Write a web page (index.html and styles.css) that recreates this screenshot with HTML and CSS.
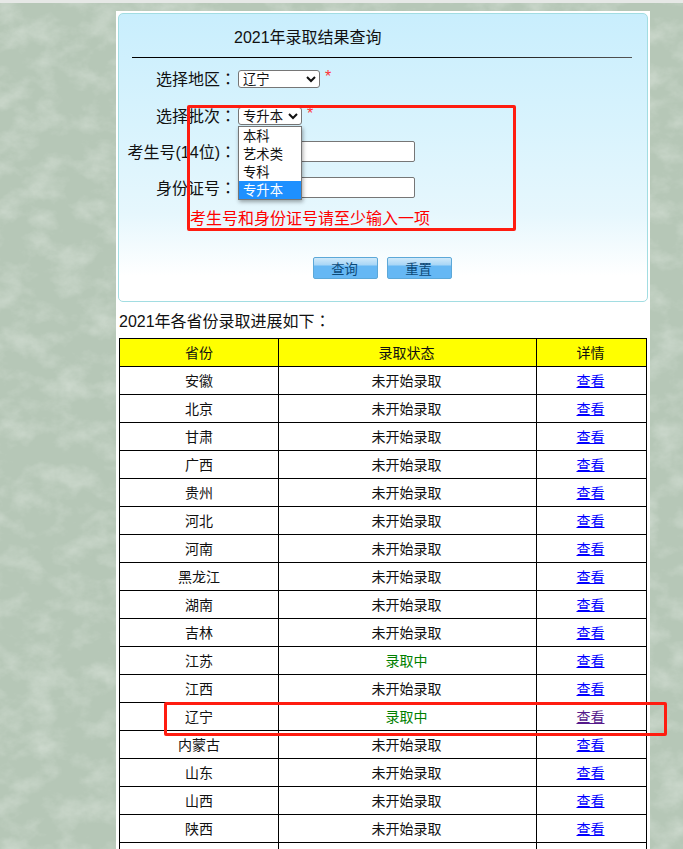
FILE: index.html
```html
<!DOCTYPE html>
<html lang="zh-CN">
<head>
  <meta charset="UTF-8">
  <title>2021年录取结果查询</title>
  <link rel="stylesheet" href="styles.css">
</head>
<body>

  <!-- mottled page background -->
  <svg class="texture" width="683" height="849" aria-hidden="true">
    <filter id="mottle" x="0" y="0" width="100%" height="100%">
      <feTurbulence type="fractalNoise" baseFrequency="0.035 0.045" numOctaves="5" seed="11"/>
      <feColorMatrix type="matrix" values="0 0 0 0 0.76  0 0 0 0 0.82  0 0 0 0 0.76  1 0 0 0 -0.42"/>
    </filter>
    <rect width="683" height="849" filter="url(#mottle)"/>
  </svg>

  <div class="wrap">

    <!-- Query form -->
    <div class="card">
      <h1 class="title">2021年录取结果查询</h1>
      <div class="rule"></div>

      <div class="row row-area">
        <label class="label">选择地区<span class="colon" lang="zh-TW">：</span></label>
        <select class="pick pick-area"><option>辽宁</option></select>
        <span class="star">*</span>
      </div>

      <div class="row row-batch">
        <label class="label">选择批次<span class="colon" lang="zh-TW">：</span></label>
        <div class="pick-holder">
          <select class="pick pick-batch"><option>专升本</option></select>
          <ul class="dropdown">
            <li>本科</li>
            <li>艺术类</li>
            <li>专科</li>
            <li class="current">专升本</li>
          </ul>
        </div>
        <span class="star">*</span>
      </div>

      <div class="row row-exam">
        <label class="label">考生号(14位)<span class="colon" lang="zh-TW">：</span></label>
        <input class="field" type="text">
      </div>

      <div class="row row-id">
        <label class="label">身份证号<span class="colon" lang="zh-TW">：</span></label>
        <input class="field" type="text">
      </div>

      <p class="hint">考生号和身份证号请至少输入一项</p>

      <div class="actions">
        <button class="btn">查询</button>
        <button class="btn">重置</button>
      </div>
    </div>

    <p class="caption">2021年各省份录取进展如下<span class="colon" lang="zh-TW">：</span></p>

    <table class="progress">
      <colgroup>
        <col class="col-province">
        <col class="col-status">
        <col class="col-detail">
      </colgroup>
      <thead>
        <tr><th>省份</th><th>录取状态</th><th>详情</th></tr>
      </thead>
      <tbody>
        <tr><td>安徽</td><td>未开始录取</td><td><a href="#">查看</a></td></tr>
        <tr><td>北京</td><td>未开始录取</td><td><a href="#">查看</a></td></tr>
        <tr><td>甘肃</td><td>未开始录取</td><td><a href="#">查看</a></td></tr>
        <tr><td>广西</td><td>未开始录取</td><td><a href="#">查看</a></td></tr>
        <tr><td>贵州</td><td>未开始录取</td><td><a href="#">查看</a></td></tr>
        <tr><td>河北</td><td>未开始录取</td><td><a href="#">查看</a></td></tr>
        <tr><td>河南</td><td>未开始录取</td><td><a href="#">查看</a></td></tr>
        <tr><td>黑龙江</td><td>未开始录取</td><td><a href="#">查看</a></td></tr>
        <tr><td>湖南</td><td>未开始录取</td><td><a href="#">查看</a></td></tr>
        <tr><td>吉林</td><td>未开始录取</td><td><a href="#">查看</a></td></tr>
        <tr><td>江苏</td><td class="open">录取中</td><td><a href="#">查看</a></td></tr>
        <tr><td>江西</td><td>未开始录取</td><td><a href="#">查看</a></td></tr>
        <tr><td>辽宁</td><td class="open">录取中</td><td><a class="visited" href="#">查看</a></td></tr>
        <tr><td>内蒙古</td><td>未开始录取</td><td><a href="#">查看</a></td></tr>
        <tr><td>山东</td><td>未开始录取</td><td><a href="#">查看</a></td></tr>
        <tr><td>山西</td><td>未开始录取</td><td><a href="#">查看</a></td></tr>
        <tr><td>陕西</td><td>未开始录取</td><td><a href="#">查看</a></td></tr>
        <tr><td></td><td></td><td></td></tr>
      </tbody>
    </table>

    <!-- Red annotation boxes drawn over the screenshot -->
    <div class="mark mark-form"></div>
    <div class="mark mark-row"></div>
  </div>

</body>
</html>
```

FILE: styles.css
```css
/* General Reset */
* {
  margin: 0;
  padding: 0;
  box-sizing: border-box;
}
html, body {
  height: 849px;
  overflow: hidden;
}
body {
  position: relative;
  background-color: #b6c7b7;
  border-top: 3px solid #e6e8e6;
  font-family: "Liberation Sans", "Noto Sans CJK SC", sans-serif;
  color: #111;
}
.texture {
  position: absolute;
  top: -3px;
  left: 0;
}
.wrap {
  position: relative;
  width: 534px;
  height: 846px;
  margin: 8px 0 0 116px;
  padding: 2px 2px 0;
  background: #fff;
}
.colon {
  font-family: "Noto Sans CJK TC", sans-serif;
}

/* Query form */
.card {
  height: 289px;
  padding: 0 15px 0 13px;
  border: 1px solid #a2dde2;
  border-radius: 5px;
  background: linear-gradient(#c9eefd 0, #d8f3fd 110px, #e6f7fd 200px, #fff 262px);
}
.title {
  height: 34px;
  padding: 14px 0 0 102px;
  font-size: 16px;
  font-weight: normal;
  line-height: 20px;
}
.rule {
  height: 1px;
  margin-top: 9px;
  background: linear-gradient(to right, #000 60%, #555);
}
.row {
  display: flex;
  align-items: center;
  height: 18px;
  margin-left: -13px;
}
.row-area { margin-top: 12px; }
.row-batch { margin-top: 19px; }
.row-exam { height: 21px; margin-top: 16px; }
.row-id { height: 21px; margin-top: 15px; }
.label {
  width: 117px;
  margin-right: 2px;
  font-size: 16px;
  line-height: 18px;
  text-align: right;
  white-space: nowrap;
}
.pick {
  display: block;
  height: 18px;
  border: 1px solid #767676;
  border-radius: 3px;
  background: #fff;
  color: #111;
  font-family: inherit;
  font-size: 13.33px;
}
.pick-area { width: 82px; }
.pick-batch { width: 64px; }
.pick-holder {
  position: relative;
  height: 18px;
}
.star {
  margin: -4px 0 0 5px;
  color: #f33;
  font-size: 16px;
  line-height: 18px;
}
.dropdown {
  position: absolute;
  top: 19px;
  left: 0;
  width: 64px;
  border: 1px solid #767676;
  background: #fff;
  box-shadow: 1px 2px 4px rgba(0, 0, 0, 0.35);
  list-style: none;
  font-size: 13.33px;
  line-height: 18px;
  z-index: 2;
}
.dropdown li {
  height: 18px;
  padding: 1px 0 0 4px;
}
.dropdown .current {
  background: #1e90ff;
  color: #fff;
}
.field {
  display: block;
  width: 177px;
  height: 21px;
  border: 1px solid #767676;
  border-radius: 2px;
  background: #fff;
}
.hint {
  height: 20px;
  margin: 11px 0 0 58px;
  color: #f00;
  font-size: 16px;
  line-height: 20px;
}
.actions {
  display: flex;
  gap: 9px;
  margin: 28px 0 0 181px;
}
.btn {
  width: 65px;
  height: 22px;
  padding-right: 2px;
  border: 1px solid #5ca8d8;
  border-radius: 2px;
  background: linear-gradient(#cfe9fa 0, #a8d6f6 35%, #66b8f4 40%, #66b8f4 100%);
  color: #0c4a78;
  font-family: inherit;
  font-size: 13.33px;
  cursor: pointer;
}

/* Progress table */
.caption {
  height: 22px;
  margin: 7px 0 0 1px;
  font-size: 16px;
  line-height: 22px;
}
.progress {
  width: 527px;
  margin: 7px 0 0 1px;
  border-collapse: collapse;
  table-layout: fixed;
  font-size: 14px;
}
.col-province { width: 159px; }
.col-status { width: 258px; }
.col-detail { width: 110px; }
.progress th,
.progress td {
  height: 28px;
  padding-bottom: 2px;
  border: 1px solid #000;
  font-weight: normal;
  text-align: center;
  vertical-align: middle;
}
.progress th:nth-child(n+2),
.progress td:nth-child(n+2) {
  padding-right: 2px;
}
.progress th {
  background: #ff0;
}
.progress .open {
  color: #008000;
}
.progress a {
  color: #00f;
}
.progress a.visited {
  color: #551a8b;
}

/* Annotations */
.mark {
  position: absolute;
  border: 3px solid #ff1c10;
  border-radius: 2px;
  z-index: 3;
}
.mark-form {
  top: 94px;
  left: 71px;
  width: 329px;
  height: 126px;
}
.mark-row {
  top: 691px;
  left: 48px;
  width: 503px;
  height: 34px;
}
```
